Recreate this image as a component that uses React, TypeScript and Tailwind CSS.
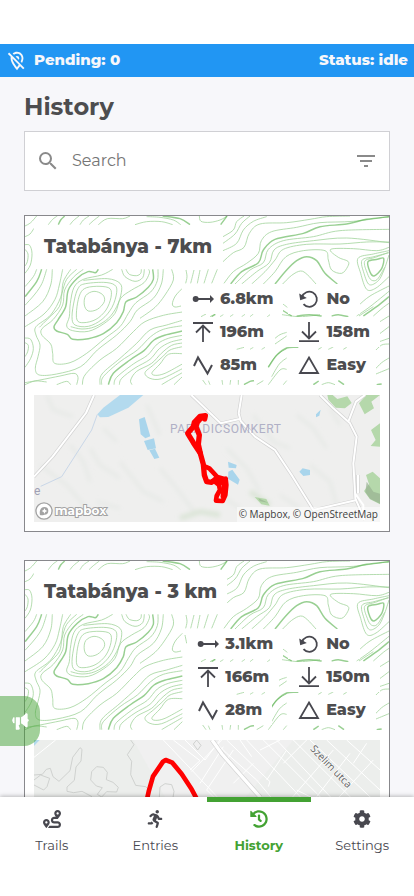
import type { ReactNode } from "react";
import { FaCog, FaHistory, FaRoute, FaRunning } from "react-icons/fa";
import { IoMegaphone } from "react-icons/io5";
import { MdFilterList, MdOutlineLocationOff, MdSearch } from "react-icons/md";

type Line = number[];

/** Turns a flat list of x, y pairs into a smooth SVG path. */
function smooth(line: Line, closed = false): string {
  const n = line.length / 2;
  const at = (i: number): [number, number] => {
    const k = closed ? (i + n) % n : Math.max(0, Math.min(n - 1, i));
    return [line[k * 2], line[k * 2 + 1]];
  };
  let d = `M${at(0)[0]} ${at(0)[1]}`;
  const last = closed ? n : n - 1;
  for (let i = 0; i < last; i++) {
    const [a, b, c, e] = [at(i - 1), at(i), at(i + 1), at(i + 2)];
    d += `C${b[0] + (c[0] - a[0]) / 6} ${b[1] + (c[1] - a[1]) / 6} ${c[0] - (e[0] - b[0]) / 6} ${c[1] - (e[1] - b[1]) / 6} ${c[0]} ${c[1]}`;
  }
  return closed ? d + "Z" : d;
}

const rings: Line[] = [
  [222, 244, 248, 254, 253, 275, 232, 298, 205, 303, 193, 285, 197, 257],
  [200, 233, 240, 229, 270, 236, 273, 262, 258, 300, 228, 328, 192, 338, 171, 330, 171, 290, 181, 250],
  [192, 222, 250, 217, 284, 225, 290, 248, 276, 292, 246, 328, 205, 349, 165, 345, 156, 320, 163, 270, 174, 236],
];

const thin: Line[] = [
  [15, 48, 32, 38, 50, 18], [15, 80, 30, 72, 42, 55],
  [85, 44, 98, 28, 112, 18], [150, 44, 160, 32, 177, 18], [180, 44, 190, 30, 207, 18],
  [207, 44, 220, 32, 238, 18], [235, 44, 262, 26, 308, 26, 330, 18],
  [345, 44, 380, 35, 425, 35, 458, 44], [380, 20, 420, 22, 460, 30, 482, 44],
  [538, 18, 543, 34, 570, 37, 600, 30, 622, 18],
  [15, 104, 29, 106, 36, 130, 31, 165, 15, 190], [15, 118, 24, 132, 22, 155, 15, 168],
  [50, 178, 40, 200, 15, 230], [80, 178, 66, 220, 45, 252, 15, 286],
  [97, 178, 92, 225, 68, 275, 15, 318], [128, 178, 118, 225, 105, 268, 72, 312, 15, 350],
  [152, 178, 130, 215, 122, 262, 92, 315, 48, 350, 48, 375, 60, 405, 54, 440, 46, 475, 58, 495, 110, 492, 182, 470, 232, 420, 290, 375, 330, 335, 352, 300, 400, 265, 424, 222, 430, 178],
  [190, 178, 160, 202, 134, 240, 128, 285, 100, 328, 66, 356, 66, 376, 92, 402, 98, 430, 104, 460, 150, 458, 200, 430, 255, 385, 300, 350, 325, 310, 348, 278, 392, 246, 412, 212, 414, 178],
  [170, 178, 140, 208, 126, 250, 118, 290, 85, 325, 58, 352],
  [278, 178, 245, 195, 190, 208, 162, 232, 151, 280, 148, 320, 140, 348, 158, 362, 205, 364, 250, 342, 285, 310, 302, 265, 335, 240, 372, 218, 388, 190, 386, 178],
  [190, 211, 262, 206, 300, 220, 304, 248, 290, 290, 265, 325, 225, 350, 186, 357, 152, 350],
  [305, 178, 315, 200, 345, 214, 368, 203, 373, 178], [318, 178, 328, 193, 350, 197, 362, 190, 364, 178],
  [455, 178, 460, 210, 435, 255, 405, 292, 360, 325],
  [487, 235, 466, 258, 457, 282, 465, 291, 483, 288],
  [187, 524, 195, 495, 240, 450, 290, 415, 340, 365, 375, 335, 430, 316, 487, 306],
  [240, 524, 246, 492, 300, 445, 350, 400, 390, 360, 440, 345, 487, 331],
  [487, 347, 430, 358, 392, 380, 352, 420, 300, 455, 250, 500, 245, 524],
  [487, 376, 445, 385, 412, 402, 382, 436, 340, 462, 290, 502, 282, 524],
  [487, 388, 450, 397, 418, 416, 390, 448, 345, 474, 305, 505, 298, 524],
  [487, 399, 455, 406, 424, 430, 395, 460, 350, 484, 332, 510, 336, 524],
  [487, 410, 450, 420, 428, 440, 400, 465, 375, 488, 390, 505, 425, 506, 487, 476],
  [487, 431, 445, 433, 420, 462, 396, 488, 406, 496, 435, 490, 487, 462],
  [487, 488, 445, 512, 425, 524], [487, 500, 462, 524], [548, 510, 558, 524],
  [15, 384, 32, 388, 40, 415, 32, 445, 15, 472], [15, 398, 25, 406, 23, 425, 15, 440],
  [15, 518, 60, 510, 120, 498, 162, 490, 174, 502, 170, 524], [15, 524, 45, 513, 80, 516],
  [110, 524, 140, 514, 152, 524],
  [497, 220, 501, 200, 498, 180], [512, 220, 522, 180], [532, 220, 540, 180], [552, 220, 565, 178], [575, 220, 592, 178],
  [500, 265, 495, 240], [543, 320, 558, 312],
  [609, 80, 640, 60, 650, 35, 672, 18], [609, 100, 645, 72, 665, 40, 690, 18],
  [609, 122, 650, 100, 670, 60, 700, 34, 740, 20], [609, 155, 640, 128, 672, 112, 688, 70, 720, 42, 800, 38, 870, 28, 920, 20, 990, 18],
  [612, 220, 640, 185, 680, 160, 715, 130, 724, 92, 755, 65, 830, 52, 900, 38, 1000, 34, 1107, 20],
  [645, 222, 690, 180, 730, 158, 745, 118, 790, 92, 880, 80, 960, 62, 1107, 58],
  [665, 222, 710, 185, 748, 158, 762, 120, 800, 103, 880, 92, 980, 84, 1107, 98],
  [695, 222, 735, 185, 765, 150, 790, 118, 860, 103, 960, 102, 1040, 96, 1107, 96],
  [730, 222, 765, 185, 798, 140, 850, 122, 915, 122, 925, 150, 935, 180, 965, 190, 983, 170, 984, 154, 955, 142, 932, 118, 1000, 116, 1070, 122, 1107, 112],
  [786, 224, 815, 196, 842, 183, 862, 194, 888, 222],
  [786, 280, 802, 292], [786, 314, 840, 320, 900, 314],
  [765, 385, 780, 374, 800, 367], [765, 402, 800, 378],
  [745, 470, 770, 435, 800, 416], [755, 500, 778, 462, 800, 444], [745, 524, 780, 480, 800, 478],
  [1107, 122, 1060, 132, 1014, 145, 1022, 190, 1040, 238, 1068, 234, 1107, 200],
  [1107, 128, 1062, 140, 1026, 151, 1032, 190, 1048, 224, 1075, 212, 1092, 180, 1107, 135],
  [1104, 128, 1066, 142, 1034, 154, 1042, 190, 1054, 210, 1072, 208, 1094, 172],
  [1017, 285, 1050, 258, 1107, 228], [1010, 318, 1050, 290, 1107, 244],
  [1060, 318, 1090, 292, 1107, 280], [1078, 336, 1107, 318], [1078, 372, 1107, 350],
  [1078, 395, 1107, 385], [1063, 425, 1085, 405, 1107, 402], [1063, 480, 1085, 458, 1107, 444], [1063, 494, 1107, 476],
  [570, 320, 586, 312], [600, 320, 610, 314], [630, 320, 640, 313], [665, 320, 675, 313], [690, 320, 700, 312], [742, 320, 750, 314],
  [650, 418, 672, 412], [690, 418, 700, 412], [725, 418, 735, 412], [895, 418, 905, 412], [925, 418, 940, 411], [970, 418, 980, 412],
  [570, 524, 565, 512], [608, 524, 606, 510], [630, 524, 632, 510], [655, 524, 655, 510], [800, 512, 790, 524],
  [905, 524, 925, 518, 945, 524], [710, 524, 730, 512], [1017, 318, 1060, 290],
];

const thick: Line[] = [
  [115, 44, 122, 30, 134, 18], [428, 18, 480, 26, 510, 44], [602, 44, 621, 18],
  [65, 178, 50, 215, 15, 260],
  [235, 178, 226, 188, 204, 185, 172, 205, 145, 240, 137, 290, 115, 328, 102, 350, 110, 363, 142, 373, 158, 388, 205, 386, 250, 371, 290, 338, 310, 305, 318, 275, 350, 261, 385, 232, 400, 208, 398, 178],
  [265, 524, 280, 490, 330, 450, 372, 422, 402, 390, 440, 374, 487, 363],
  [632, 222, 665, 185, 715, 158, 730, 120, 765, 88, 850, 70, 900, 50, 980, 42, 1040, 28, 1107, 20],
  [765, 222, 800, 180, 830, 152, 860, 140, 890, 152, 915, 190, 952, 222],
  [786, 300, 815, 318], [1030, 318, 1070, 290, 1107, 260], [575, 320, 586, 313],
  [745, 472, 770, 436, 800, 414, 835, 412], [830, 318, 868, 314, 905, 318], [935, 318, 955, 314, 985, 320],
  [672, 524, 690, 514, 702, 512], [880, 524, 896, 513], [955, 512, 972, 524], [1070, 524, 1085, 522],
];

const peak: Line = [1044, 155, 1072, 148, 1091, 145, 1085, 176, 1062, 198, 1050, 186];

function Contours() {
  return (
    <svg viewBox="15 18 1092 507" preserveAspectRatio="none" className="absolute inset-0 size-full" aria-hidden="true" fill="none" stroke="#55b04a">
      <g strokeWidth="2.4" opacity="0.55">
        {rings.map((r, i) => <path key={i} d={smooth(r, true)} />)}
        {thin.map((l, i) => <path key={i} d={smooth(l)} />)}
      </g>
      <g strokeWidth="4.4" opacity="0.6">
        {thick.map((l, i) => <path key={i} d={smooth(l)} />)}
        <path d={smooth(peak, true)} />
      </g>
    </svg>
  );
}

function StatIcon({ children }: { children: ReactNode }) {
  return (
    <svg viewBox="0 0 22 22" className="size-[22px] shrink-0" fill="none" stroke="#48484f" strokeWidth="1.8" aria-hidden="true">
      {children}
    </svg>
  );
}

const icons = {
  distance: (
    <StatIcon>
      <path d="M4 11h14" strokeWidth="2" />
      <circle cx="3.7" cy="11" r="3" fill="#48484f" stroke="none" />
      <path d="M18 7l4 4-4 4z" fill="#48484f" stroke="none" />
    </StatIcon>
  ),
  loop: (
    <StatIcon>
      <path d="M4 9A7.600 7.600 0 1 1 5.500 16.200" />
      <path d="M1.200 5.500l1 6.800 6.600-2.300z" fill="#48484f" stroke="none" />
    </StatIcon>
  ),
  up: (
    <StatIcon>
      <path d="M1 2h20M11 21V4.500M4 11.500l7-7 7 7" />
    </StatIcon>
  ),
  down: (
    <StatIcon>
      <path d="M1 20.200h20M11 1v16.500M4 10.500l7 7 7-7" />
    </StatIcon>
  ),
  wave: (
    <StatIcon>
      <path d="M2 12l4-8.500 9.500 16L20 11" strokeWidth="2" />
    </StatIcon>
  ),
  level: (
    <StatIcon>
      <path d="M11 3.500L20 19H2z" />
    </StatIcon>
  ),
};

function Stat({ icon, value, label }: { icon: keyof typeof icons; value: string; label: string }) {
  return (
    <li title={label} className="flex h-[30px] w-fit items-center gap-[6px] bg-white px-[10px] text-base font-extrabold">
      {icons[icon]}
      {value}
    </li>
  );
}

interface Trail {
  name: string;
  distance: string;
  ascent: string;
  descent: string;
  height: string;
  map: ReactNode;
}

function TrailCard({ trail }: { trail: Trail }) {
  return (
    <article className="border border-[#88888c] bg-white">
      <div className="relative p-[9px] pb-[5px]">
        <Contours />
        <div className="relative">
          <h2 className="flex h-11 w-fit items-center bg-white px-[10px] text-[19px] font-extrabold">{trail.name}</h2>
          <ul className="mt-[15px] ml-auto grid w-fit grid-cols-[auto_auto] gap-x-[5px] gap-y-[3px]">
            <Stat icon="distance" label="Distance" value={trail.distance} />
            <Stat icon="loop" label="Loop" value="No" />
            <Stat icon="up" label="Ascent" value={trail.ascent} />
            <Stat icon="down" label="Descent" value={trail.descent} />
            <Stat icon="wave" label="Elevation" value={trail.height} />
            <Stat icon="level" label="Difficulty" value="Easy" />
          </ul>
        </div>
      </div>
      <div className="relative mx-[9px] mt-[10px] mb-[9px] h-[127px] overflow-hidden">{trail.map}</div>
    </article>
  );
}

function OrchardMap() {
  return (
    <>
      <svg viewBox="42 30 1038 381" preserveAspectRatio="xMidYMid slice" className="size-full bg-[#efefee]" fill="none" aria-hidden="true">
        <defs>
          <filter id="soft" x="-20%" y="-20%" width="140%" height="140%"><feGaussianBlur stdDeviation="7" /></filter>
        </defs>
        <g stroke="#e6e9e6" strokeWidth="9" filter="url(#soft)">
          <path d="M80 30l20 45 60 20M150 180l40 50 20 60M210 190l30 50 60 40M60 240l80 60 60 70M250 130l40 40M300 230l70 90 60 30M380 60l40 90M420 250l50 60 60 80M230 350l70 20M620 190l60 60 40 70M700 90l60 80 50 20M780 330l60 40M830 90l50 40 40 60M870 240l60 50 20 70M930 70l30 50M600 330l60 40" />
          <path d="M480 400l60-20 60 10M690 320l60 40" stroke="#dce5d8" strokeWidth="16" />
        </g>
        <path d="M300 30L370 30L325 68L265 96L240 97L232 88L250 68z" fill="#b3daee" />
        <path d="M357 103l17-7 17 58-15 6-14-12zM372 168l30-8 6 30-25 5zM388 196l17-5 13 27-15 4z" fill="#a9d5ec" />
        <path d="M888 88l14-14-4 18-10 5zM624 230l26 10-2 10-22-2zM625 260l12-6 22 30-5 15-30-18zM838 260l10-10 22 5v15l-20 3z" fill="#a9d5ec" />
        <g fill="#b5d8ab">
          <path d="M922 30h16l14 12 30-8 13 20-20 16-28-2-22-24zM1017 55l22-25h41l-26 20 8 20-28 18zM1053 135l27-20v70l-28-2 15-18zM1038 270l20-10 22 20v78l-30-15-18-25 15-20zM704 336l35 6 10 20-25-4z" />
        </g>
        <path d="M1040 290l20 30 20 6v30l-30-15-14-20zM715 340l30 13-25-4zM940 45l30 15" fill="#98b292" opacity=".7" />
        <path d="M232 88L215 135L125 275L62 304" stroke="#c9d7e8" strokeWidth="3" />
        <g stroke="#d2d2d2" strokeWidth="10" strokeLinejoin="round">
          <path d="M222 30L198 84L98 215L42 275M514 30L602 115L658 102M665 30L656 85L662 108L705 155L765 195L818 275L880 375L1010 345" />
          <path d="M900 30L940 70L990 115L1010 155L1000 235L1006 340L1034 405M985 110L1008 50L1035 30M1014 270v55" />
        </g>
        <g stroke="#fff" strokeWidth="6" strokeLinejoin="round">
          <path d="M222 30L198 84L98 215L42 275M514 30L602 115L658 102M665 30L656 85L662 108L705 155L765 195L818 275L880 375L1010 345" />
          <path d="M900 30L940 70L990 115L1010 155L1000 235L1006 340L1034 405M985 110L1008 50L1035 30M1014 270v55M1005 325l25 35 0 45" />
        </g>
      </svg>
      <span className="absolute top-[26px] left-[136px] font-['Roboto',sans-serif] text-xs leading-4 tracking-wider text-[#b0b0c6]">PARADICSOMKERT</span>
      <span className="absolute top-[88px] left-0 font-['Roboto',sans-serif] text-xs leading-4 text-[#a0a0b4]">e</span>
      <svg viewBox="42 30 1038 381" preserveAspectRatio="xMidYMid slice" className="absolute inset-0 size-full" fill="none" stroke="#f00" strokeWidth="16" strokeLinejoin="round" strokeLinecap="round" aria-hidden="true">
        <path d="M554 102L556 92L540 94L523 112L520 125L503 145L520 173L541 205L550 238L553 270L560 290L575 292L588 281L610 292" />
        <path d="M545 97L532 112L528 125L538 150L535 178L541 205" />
        <path d="M558 246L568 250L592 276L613 282L617 281L619 300L616 330L608 348L588 347L590 333L600 315L597 300L582 288" strokeWidth="14" />
        <path d="M592 280L610 300L606 335" strokeWidth="9" />
      </svg>
      <div className="absolute bottom-[2px] left-[1px] flex items-center gap-[2px] text-white">
        <svg viewBox="0 0 20 20" className="size-[18px]" aria-hidden="true">
          <circle cx="10" cy="10" r="9" fill="#fff" stroke="#a3a3a3" strokeWidth="1.500" />
          <path d="M5.500 14.500c-1-5 1-9 5-9a4.300 4.300 0 0 1 0 8.600c-2 .7-3.500.7-5 .4z" fill="#a3a3a3" />
          <path d="M10.500 7l1 2 2 1-2 1-1 2-1-2-2-1 2-1z" fill="#fff" />
        </svg>
        <span className="text-xs leading-4 font-bold [-webkit-text-stroke:2px_#a3a3a3] [paint-order:stroke_fill]">mapbox</span>
      </div>
      <small className="absolute right-0 bottom-0 bg-white/50 px-[2px] font-['Open_Sans',sans-serif] text-[10px] leading-[15px] text-[#404040]">© Mapbox, © OpenStreetMap</small>
    </>
  );
}

function TownMap() {
  return (
    <svg viewBox="102 570 1038 381" preserveAspectRatio="xMidYMid slice" className="size-full bg-[#eceeec]" fill="none" aria-hidden="true">
      <path d="M400 570h480l-150 180h-230z" fill="#f0f0f0" />
      <g stroke="#c9cbc9" strokeWidth="2.500" strokeLinejoin="round">
        <path d="M102 675l25-2 12-15 12-3 8 25 18 14 33-32 8-40 22-29 6 5-3 35-15 18-5 40-22 20v13l20 4 25-4 30 16M102 690l20-15 27 10-8 25-10 10-29-15" />
        <path d="M272 690l3-25 15-15 20 2 12 15-3 22 20 8 16 15-5 14-30-1-15 16-13-8 15-20-18-5zM392 570l10 14-20 30 13 20-3 40 15 32 30 4 12 12M478 741l2-30 15-10 20 3 7 20-4 25M580 582l10-12 13 16-10 14z" />
      </g>
      <g stroke="#fff" strokeWidth="3">
        <path d="M102 622l65-52M490 570l180 190M520 570l80 62-30 28M555 570l60 60 45-60M575 665l90-95M600 700l70-110M640 570l40 40 90 80 50 60M700 600l-80 120 50 50M740 570l170 180M680 570l130 125-5 15M790 570l180 180M830 570l170 180M880 570l180 180M930 570l190 180M980 570l160 150M1040 570l100 90M760 640l-60 60M780 600l60-30M720 570l35 50M800 690l60-90M870 750l130-150M850 640l70-70M950 740l100-130M1000 760l120-130M1060 640l40-60M890 720l60 30" />
      </g>
      <path d="M102 570h17l-17 18z" fill="#b3daee" />
      <path d="M636 570l30 42 115 130" stroke="#d2d2d2" strokeWidth="14" />
      <path d="M636 570l30 42 115 130" stroke="#fff" strokeWidth="10" />
      <text transform="translate(929 598) rotate(46)" fontSize="31" fill="#606060" stroke="#fff" strokeWidth="3" paintOrder="stroke" className="font-['Open_Sans',sans-serif]">Szelim utca</text>
      <path d="M436 770L446 725L459 679L489 635L497 630L517 638L545 672L575 718L592 750" stroke="#f00" strokeWidth="14" strokeLinejoin="round" />
    </svg>
  );
}

const trails: Trail[] = [
  { name: "Tatabánya - 7km", distance: "6.8km", ascent: "196m", descent: "158m", height: "85m", map: <OrchardMap /> },
  { name: "Tatabánya - 3 km", distance: "3.1km", ascent: "166m", descent: "150m", height: "28m", map: <TownMap /> },
];

const tabs = [
  { label: "Trails", Icon: FaRoute, active: false },
  { label: "Entries", Icon: FaRunning, active: false },
  { label: "History", Icon: FaHistory, active: true },
  { label: "Settings", Icon: FaCog, active: false },
];

export default function App() {
  return (
    <div className="relative flex h-screen flex-col bg-[#f7f7fa] pt-11 font-['Montserrat','Inter',sans-serif] text-[#4d4d4f] before:absolute before:inset-x-0 before:top-0 before:h-11 before:bg-white">
      <header className="flex h-[33px] shrink-0 items-center justify-between bg-[#2196f3] px-[6px] text-[15px] font-extrabold text-[#f7f7fa]">
        <span className="flex items-center gap-[6px]">
          <MdOutlineLocationOff className="size-[22px]" aria-hidden="true" />
          Pending: 0
        </span>
        <span>Status: idle</span>
      </header>

      <main className="min-h-0 flex-1 overflow-y-auto px-6 [scrollbar-width:none]">
        <h1 className="pt-3 pb-[6px] text-2xl leading-9 font-bold">History</h1>
        <div className="flex h-[60px] items-center gap-3 border border-[#d0d0d4] bg-white px-[11px] text-[#8a8a8a]">
          <MdSearch className="size-6 shrink-0" aria-hidden="true" />
          <input type="search" aria-label="Search" placeholder="Search" className="min-w-0 flex-1 bg-transparent text-base outline-none placeholder:text-[#757575]" />
          <button type="button" aria-label="Filter">
            <MdFilterList className="size-6" />
          </button>
        </div>
        <div className="flex flex-col gap-7 py-6">
          {trails.map((trail) => <TrailCard key={trail.name} trail={trail} />)}
        </div>
      </main>

      <button type="button" aria-label="Announcements" className="absolute bottom-[150px] left-0 flex h-[50px] w-10 items-center justify-center rounded-r-[16px] bg-[#43a233]/50 text-white">
        <IoMegaphone className="size-[19px]" />
      </button>

      <nav className="relative flex shrink-0 bg-white pb-[34px] shadow-[0_-1px_4px_rgba(0,0,0,0.25)]">
        {tabs.map(({ label, Icon, active }) => (
          <a
            key={label}
            href={`#${label.toLowerCase()}`}
            aria-current={active ? "page" : undefined}
            className={`flex h-[65px] flex-1 flex-col items-center gap-[7px] border-t-[5px] pt-2 text-[13px] leading-5 ${active ? "border-[#43a233] font-bold text-[#43a233]" : "border-transparent text-[#48484f]"}`}
          >
            <Icon className="size-[18px]" aria-hidden="true" />
            {label}
          </a>
        ))}
      </nav>
    </div>
  );
}
